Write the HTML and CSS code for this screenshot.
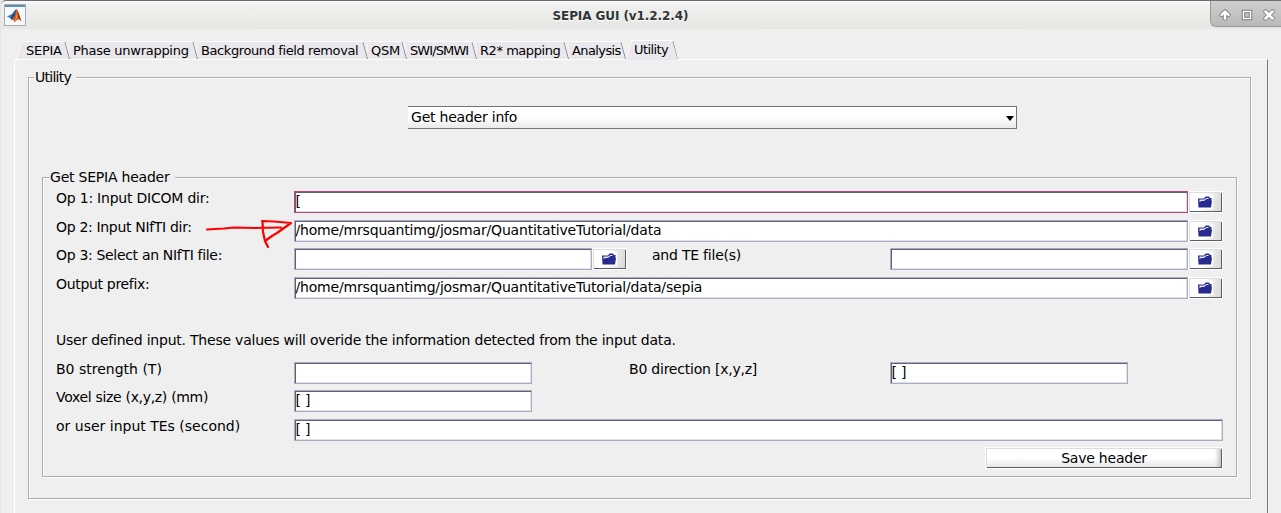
FILE: index.html
```
<!DOCTYPE html>
<html lang="en">
<head>
<meta charset="utf-8">
<title>SEPIA GUI (v1.2.2.4)</title>
<link rel="stylesheet" href="styles.css">
</head>
<body>
<svg class="defs" width="0" height="0" aria-hidden="true">
  <symbol id="folder" viewBox="0 0 16 14">
    <rect width="16" height="14" fill="#fff"/>
    <path d="M1 3.500h6L8.500 1.500h3.500l1 1.500h1.500v3h.5l-1 6.500H1.500z" fill="#272b8e"/>
    <path d="M2.500 4.500h4.500L9.500 3h2v1H9.500L7 6H4.500L2.500 7z" fill="#e4e5f3"/>
  </symbol>
</svg>
<div class="window">
  <header class="titlebar">
    <svg class="app-icon" width="22" height="22" viewBox="0 0 22 22">
      <rect x=".5" y=".5" width="21" height="21" fill="#f7f8f9" stroke="#a3adb5"/>
      <rect x="1" y="1" width="20" height="2" fill="#5b8db5"/>
      <path d="M3 12.500L8 10l4-5 1 2-2 5-3 4-2-2z" fill="#3b7fb5"/>
      <path d="M8 11l4.500-6L11 12l-3 4-1.500-2z" fill="#234f82"/>
      <path d="M12.500 5c2 2 3 8 5 12l-3-2-4 3-2-3c2-1 3-6 4-10z" fill="#d9531e"/>
      <path d="M13 6c1 3 1 7-1 10l-1.500 1.500c2-4 2-7 2.500-11.500z" fill="#f6a52c"/>
      <path d="M13 6c2 3 3 8 4.500 11L14 14z" fill="#a82a18"/>
    </svg>
    <h1 class="title">SEPIA GUI (v1.2.2.4)</h1>
    <div class="controls">
      <svg width="70" height="26" viewBox="0 0 70 26">
        <g stroke-linejoin="round" stroke-linecap="round" fill="none">
          <path d="M14 17.500v-6M10.500 14L14 10.500l3.500 3.500" stroke="#888886" stroke-width="4.500"/>
          <path d="M14 17.500v-6M10.500 14L14 10.500l3.500 3.500" stroke="#fff" stroke-width="2.400"/>
          <rect x="32.500" y="10.500" width="7" height="7" stroke="#858583" stroke-width="3.500" stroke-linejoin="miter"/>
          <rect x="32.500" y="10.500" width="7" height="7" stroke="#fff" stroke-width="1.300" stroke-linejoin="miter"/>
          <path d="M54.500 10.500l7 7m0-7l-7 7" stroke="#888886" stroke-width="4.500"/>
          <path d="M54.500 10.500l7 7m0-7l-7 7" stroke="#fff" stroke-width="2.500"/>
        </g>
      </svg>
    </div>
  </header>
  <main class="client">
    <nav class="tabs">
      <span class="tab t1">SEPIA</span>
      <span class="tab t2">Phase unwrapping</span>
      <span class="tab t3">Background field removal</span>
      <span class="tab t4">QSM</span>
      <span class="tab t5">SWI/SMWI</span>
      <span class="tab t6">R2* mapping</span>
      <span class="tab t7">Analysis</span>
      <span class="tab t8">Utility</span>
    </nav>
    <section class="page">
      <div class="group outer">
        <span class="legend tight">Utility</span>
        <div class="select"><span>Get header info</span><i class="arrow"></i></div>
        <div class="group inner">
          <span class="legend">Get SEPIA header</span>
          <div class="rows files">
            <div class="row"><label>Op 1: Input DICOM dir:</label><div class="field wide focus">[</div><button class="browse"><svg width="16" height="14"><use href="#folder"/></svg></button></div>
            <div class="row"><label class="snug">Op 2: Input NIfTI dir:</label><div class="field wide">/home/mrsquantimg/josmar/QuantitativeTutorial/data</div><button class="browse"><svg width="16" height="14"><use href="#folder"/></svg></button></div>
            <div class="row"><label class="snug">Op 3: Select an NIfTI file:</label><div class="field file"></div><button class="browse"><svg width="16" height="14"><use href="#folder"/></svg></button><label class="te">and TE file(s)</label><div class="field file"></div><button class="browse"><svg width="16" height="14"><use href="#folder"/></svg></button></div>
            <div class="row"><label class="snug">Output prefix:</label><div class="field wide">/home/mrsquantimg/josmar/QuantitativeTutorial/data/sepia</div><button class="browse"><svg width="16" height="14"><use href="#folder"/></svg></button></div>
          </div>
          <p class="note">User defined input. These values will overide the information detected from the input data.</p>
          <div class="rows values">
            <div class="row"><label class="loose">B0 strength (T)</label><div class="field short"></div><label class="dir">B0 direction [x,y,z]</label><div class="field short">[ ]</div></div>
            <div class="row"><label class="snug">Voxel size (x,y,z) (mm)</label><div class="field short">[ ]</div></div>
            <div class="row"><label class="loose">or user input TEs (second)</label><div class="field full">[ ]</div></div>
            <div class="row end"><button class="save">Save header</button></div>
          </div>
        </div>
      </div>
    </section>
  </main>
  <svg class="ink" width="92" height="34" viewBox="205 216 92 34">
    <path d="M207 229.500L224 228.500 234 227.500 254 228 281 227.500M262.500 221.500L263 232 265 241 268 247M262 221L274 221.500 291 223 284 228 277 233 272 236 265 241" fill="none" stroke="#f00" stroke-width="2.200" stroke-linejoin="round" stroke-linecap="round"/>
  </svg>
</div>
</body>
</html>
```
FILE: styles.css
```
* { box-sizing: border-box; }
body { margin: 0; background: #efefef; overflow: hidden; }
.defs { position: absolute; }
.window {
  position: relative; width: 1281px; height: 513px; background: #efefef;
  font: 14px/18px "DejaVu Sans", sans-serif; letter-spacing: -0.22px; color: #000; white-space: nowrap;
  border-left: 1px solid #e4e4e3;
}
.titlebar {
  display: flex; justify-content: space-between; height: 29px; padding-left: 3px;
  border-top: 1px solid #706e6d; border-top-left-radius: 5px;
  background: linear-gradient(#fafafa, #f0f0ee 15%, #e6e6e3);
}
.app-icon { margin-top: 3px; }
.title { margin: 6px 0 0 5px; font: bold 12px/18px "DejaVu Sans", sans-serif; letter-spacing: -0.08px; color: #2e3436; text-shadow: 0 1px #fff; }
.controls {
  width: 71px; height: 26px; background: linear-gradient(#cfcfcd, #b9b9b7);
  border: solid #999997; border-width: 0 0 1px 1px; border-bottom-left-radius: 6px;
}
.client { padding: 11px 13px 0 13px; }
.tabs { display: flex; height: 19px; padding: 1px 0 0 2px; align-items: flex-end; font-size: 13px; line-height: 18px; letter-spacing: -0.27px; }
.tab {
  position: relative; height: 18px; padding-left: 3px; background: #eae8ec; border-top: 1px solid #fff;
  clip-path: polygon(2px 0, calc(100% - 5px) 0, 100% 100%, 0 100%, 0 2px);
}
.tab::after { content: ""; position: absolute; top: 0; right: 2px; width: 1px; height: 18px; background: #777; transform: skewX(15deg); }
.t1::before, .t8::before { content: ""; position: absolute; top: 0; left: 2px; width: 1px; height: 19px; background: #fff; transform: skewX(-15deg); }
.t1, .t8 { clip-path: polygon(5px 0, calc(100% - 5px) 0, 100% 100%, 0 100%); }
.t1 { width: 54px; padding-left: 10px; }
.t2 { width: 128px; }
.t3 { width: 170px; letter-spacing: -0.4px; }
.t4 { width: 39px; }
.t5 { width: 70px; letter-spacing: -0.9px; }
.t6 { width: 92px; letter-spacing: -0.45px; }
.t7 { width: 57px; letter-spacing: -0.6px; }
.t8 { width: 52px; height: 20px; margin-bottom: -1px; padding-left: 8px; z-index: 1; letter-spacing: -0.6px; }
.page { height: 454px; border: solid #fff; border-width: 1px 0 0 1px; border-right: 1px solid #777884; padding: 17px 16px 0 13px; }
.group { position: relative; border: 1px solid #acacac; box-shadow: 1px 1px #fff, inset 1px 1px #fff; }
.legend { position: absolute; top: -10px; left: 5px; padding: 0 5px 0 1px; background: #efefef; }
.tight { letter-spacing: -0.75px; }
.outer { height: 422px; padding: 28px 13px 0; }
.select {
  display: flex; justify-content: space-between; align-items: flex-start; width: 609px; height: 23px; margin: 0 0 48px 366px;
  padding: 1px 2px 0 3px; border: solid #73737a; border-width: 1px 1px 1px 0; background: linear-gradient(#fff 50%, #e9e9e9);
}
.arrow { margin-top: 8px; border: solid transparent; border-width: 5px 4px 0; border-top-color: #000; }
.inner { height: 300px; padding: 13px 13px 0 13px; }
.inner > .legend { left: 6px; }
.rows { display: grid; }
.files { grid-template-rows: 29px 28px 29px 28px; }
.values { grid-template-rows: 28px 29px 28px 28px; }
.row { display: flex; }
label { width: 238px; margin-top: -2px; }
.snug { letter-spacing: -0.32px; }
.loose { letter-spacing: 0; }
.field { height: 22px; border: 1px solid #a9adc3; box-shadow: inset 1px 1px #5f6275, inset -1px -1px #dfe1e8; background: #fff; padding: 0 0 0 0.5px; letter-spacing: -0.18px; }
.wide { width: 894px; }
.file { width: 298px; }
.short { width: 238px; }
.full { width: 929px; }
.focus { border-color: #b5487a; }
.te { width: 238px; margin-left: 25px; }
.dir { width: 261px; margin-left: 97px; }
button {
  margin: 0; padding: 0; height: 22px; font: inherit; letter-spacing: inherit; color: #000; border: 1px solid #fff;
  background: linear-gradient(90deg, transparent 97%, #bbb), linear-gradient(#fff 50%, #e4e4e4);
  box-shadow: inset 1px 1px #dadde3, inset -1px -1px #5c5d66;
}
.browse { display: flex; width: 35px; padding: 3px 0 0 8px; background: linear-gradient(100deg, #fff 40%, #d5d5d5); }
.note { margin: 26px 0 13px; }
.end { justify-content: flex-end; }
.save { width: 238px; }
.ink { position: absolute; left: 204px; top: 216px; }
```
